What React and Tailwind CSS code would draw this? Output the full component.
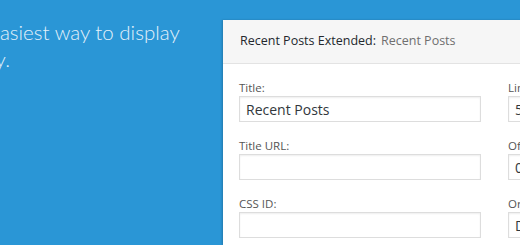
import React from 'react'

const Field = ({ label, value }) => (
  <div className="flex flex-col">
    <label className="text-[11.5px] leading-4 text-[#555]">{label}</label>
    <input
      readOnly
      value={value}
      className="h-[26px] w-full border border-[#ddd] bg-white px-[6px] text-[14px] text-[#32373c] shadow-[inset_0_1px_2px_rgba(0,0,0,0.07)] outline-none"
    />
  </div>
)

const App = () => {
  return (
    <div
      className="flex h-[245px] w-[520px] overflow-hidden bg-[#2a96d6]"
      style={{ fontFamily: '"Open Sans", "Liberation Sans", sans-serif' }}
    >
      {/* Left hero text, cut by the window */}
      <div className="w-[223px] shrink-0 overflow-hidden pt-[19px]">
        <p
          className="ml-[-50px] w-[260px] text-[20.5px] font-light leading-[27px] text-[#e4f1fa]"
          style={{ fontFamily: 'Lato, "Open Sans", sans-serif' }}
        >
          The easiest way to display simply.
        </p>
      </div>

      {/* Widget panel */}
      <div className="mt-[20px] w-[340px] shrink-0 bg-white shadow-[-1px_0_2px_rgba(0,0,0,0.2)]">
        <div className="flex h-[44px] items-center border-b border-[#e3e3e3] bg-[#f6f6f6] pl-[17px] text-[12.5px] text-[#23282d]">
          Recent Posts Extended:<span className="ml-[5px] text-[#6f6f6f]">Recent Posts</span>
        </div>
        <div className="grid grid-cols-[242px_1fr] gap-x-[27px] gap-y-4 pl-4 pt-4">
          <Field label="Title:" value="Recent Posts" />
          <Field label="Limit:" value="5" />
          <Field label="Title URL:" value="" />
          <Field label="Offset:" value="0" />
          <Field label="CSS ID:" value="" />
          <Field label="Order:" value="DESC" />
        </div>
      </div>
    </div>
  )
}

export default App
